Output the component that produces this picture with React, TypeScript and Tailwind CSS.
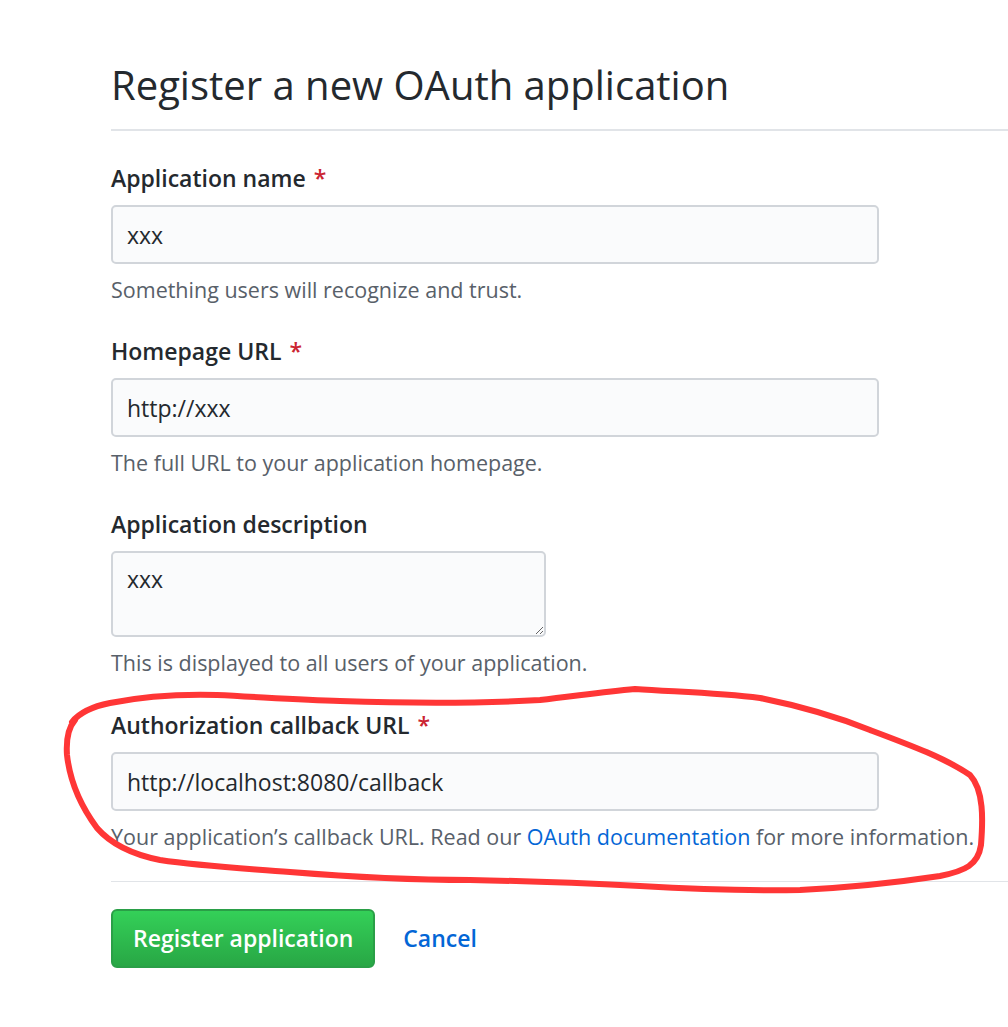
import React from 'react';

const font = { fontFamily: '"Open Sans", "Noto Sans", sans-serif' };

function Field({
  label,
  required,
  value,
  help,
}: {
  label: string;
  required?: boolean;
  value: string;
  help: React.ReactNode;
}) {
  return (
    <div className="mb-[28px]">
      <label className="block text-[23px] leading-[34px] font-semibold text-[#24292e]">
        {label}
        {required && <span className="ml-[8px] text-[#cb2431]">*</span>}
      </label>
      <input
        readOnly
        value={value}
        className="mt-[10px] block h-[59px] w-[768px] rounded-[5px] border-2 border-[#d1d5da] bg-[#fafbfc] px-[14px] text-[23px] text-[#24292e] outline-none"
      />
      <p className="mt-[10px] text-[21.5px] leading-[32px] text-[#586069]">{help}</p>
    </div>
  );
}

export default function App() {
  return (
    <div className="relative min-h-[1027px] w-[1008px] overflow-hidden bg-white" style={font}>
      <div className="pl-[111px] pt-[59px]">
        <h1 className="pb-[18px] text-[40px] leading-[52px] font-normal text-[#24292e]">
          Register a new OAuth application
        </h1>
        <div className="h-[2px] bg-[#e1e4e8]" />

        <div className="pt-[30px]">
          <Field
            label="Application name"
            required
            value="xxx"
            help="Something users will recognize and trust."
          />
          <Field
            label="Homepage URL"
            required
            value="http://xxx"
            help="The full URL to your application homepage."
          />

          <div className="mb-[29px]">
            <label className="block text-[23px] leading-[34px] font-semibold text-[#24292e]">
              Application description
            </label>
            <textarea
              readOnly
              value="xxx"
              className="mt-[10px] block h-[86px] w-[435px] rounded-[5px] border-2 border-[#d1d5da] bg-[#fafbfc] px-[14px] py-[10px] text-[23px] leading-[32px] text-[#24292e] outline-none"
            />
            <p className="mt-[10px] text-[21.5px] leading-[32px] text-[#586069]">
              This is displayed to all users of your application.
            </p>
          </div>

          <Field
            label="Authorization callback URL"
            required
            value="http://localhost:8080/callback"
            help={
              <>
                Your application’s callback URL. Read our{' '}
                <a className="text-[#0366d6]">OAuth documentation</a> for more information.
              </>
            }
          />
        </div>

        <div className="h-px bg-[#e1e4e8]" />

        <div className="flex items-center gap-[28px] pt-[27px]">
          <button className="h-[59px] rounded-[6px] border-2 border-[#2a9f47] bg-gradient-to-b from-[#34d058] to-[#28a745] px-[20px] text-[23px] font-semibold text-white">
            Register application
          </button>
          <a className="text-[23px] font-semibold text-[#0366d6]">Cancel</a>
        </div>
      </div>

      {/* red hand-drawn marker */}
      <svg className="pointer-events-none absolute left-0 top-0" width="1008" height="1027" viewBox="0 0 1008 1027">
        <path
          d="M72 722 C 80 712, 95 706, 110 703 C 140 697, 180 694, 217 695 C 260 697, 300 700, 340 701 C 400 703, 470 704, 540 700 C 570 697, 600 692, 635 689 C 680 692, 720 693, 760 698 C 800 706, 840 718, 870 730 C 910 745, 945 758, 970 775 C 984 790, 983 820, 981 845 C 978 865, 965 871, 940 876 C 900 882, 860 887, 800 890 C 740 891, 690 889, 640 886 C 580 883, 530 881, 470 880 C 400 880, 340 876, 290 872 C 240 868, 200 866, 160 860 C 130 854, 110 843, 97 828 C 80 805, 70 782, 67 755 C 66 740, 68 728, 75 720"
          fill="none"
          stroke="#ff3636"
          strokeWidth="6"
          strokeLinecap="round"
          strokeLinejoin="round"
        />
      </svg>
    </div>
  );
}
